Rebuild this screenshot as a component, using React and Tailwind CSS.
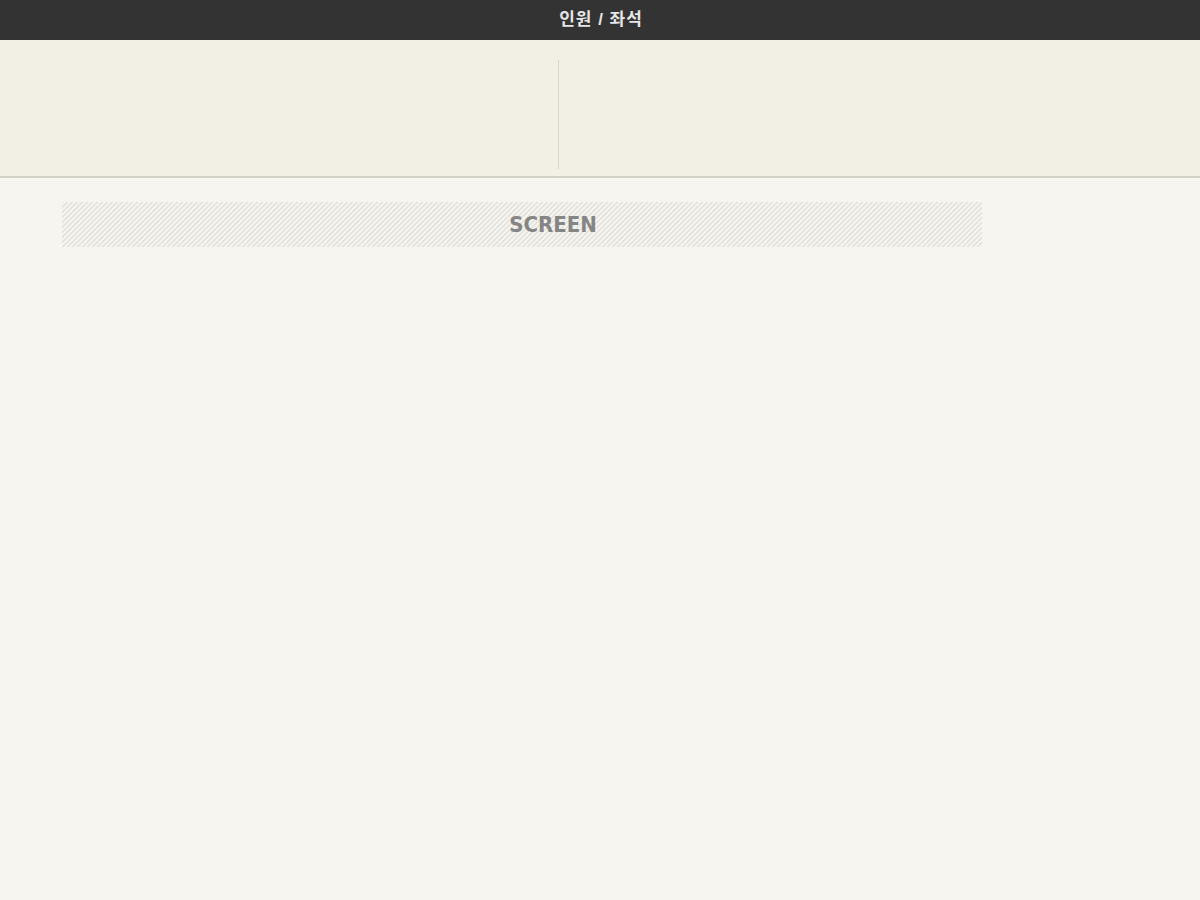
export default function App() {
  return (
    <div className="min-h-[900px] w-full bg-[#f6f5ef]" style={{ fontFamily: '"Liberation Sans", "Noto Sans CJK KR", sans-serif' }}>
      <div className="h-[40px] bg-[#333333] flex items-center justify-center">
        <span className="text-[17px] font-bold text-[#e6e6e6] tracking-[1px] pl-[2px]">인원 / 좌석</span>
      </div>
      <div className="h-[138px] bg-[#f2efe4] border-b-2 border-[#d4d2c8] flex pt-[20px] pb-[7px]">
        <div className="w-[558px]"></div>
        <div className="w-px bg-[#d8d5cb]"></div>
        <div className="flex-1"></div>
      </div>
      <div className="pt-[24px] pl-[62px]">
        <div className="w-[920px] h-[45px] flex items-center justify-center pl-[62px] bg-[repeating-linear-gradient(135deg,#e3e2dd_0px,#e3e2dd_1.4142px,#f4f3ee_1.4142px,#f4f3ee_3.5355px)]">
          <span className="text-[22px] font-bold text-[#858585]" style={{ fontFamily: '"DejaVu Sans Condensed", "Liberation Sans", sans-serif' }}>SCREEN</span>
        </div>
      </div>
    </div>
  );
}
